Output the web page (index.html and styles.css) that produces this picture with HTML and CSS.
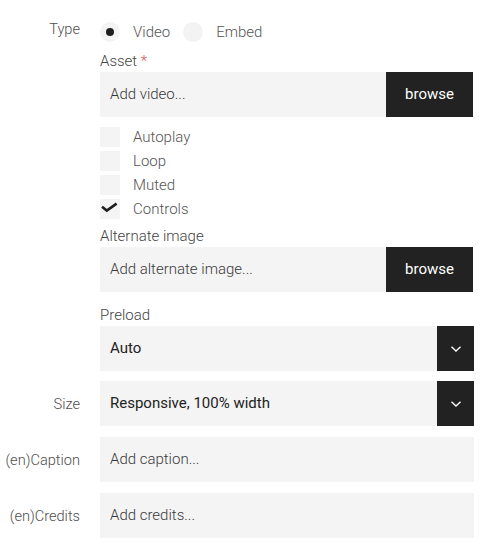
FILE: index.html
```html
<!DOCTYPE html>
<html>
<head>
<meta charset="utf-8">
<link rel="stylesheet" href="styles.css">
</head>
<body>
<form class="form">
  <div class="row row-main">
    <div class="row-label type-label">Type</div>
    <div class="content">
      <div class="radios">
        <label class="radio"><span class="radio-dot checked"></span><span class="opt-text">Video</span></label>
        <label class="radio"><span class="radio-dot"></span><span class="opt-text">Embed</span></label>
      </div>
      <div class="field field-asset">
        <div class="field-label">Asset <span class="req">*</span></div>
        <div class="input-group">
          <div class="input">Add video...</div>
          <div class="btn">browse</div>
        </div>
      </div>
      <div class="checks">
        <label class="check"><span class="box"></span><span class="opt-text">Autoplay</span></label>
        <label class="check"><span class="box"></span><span class="opt-text">Loop</span></label>
        <label class="check"><span class="box"></span><span class="opt-text">Muted</span></label>
        <label class="check"><span class="box"><svg width="20" height="20" viewBox="0 0 20 20"><polyline points="2,7.8 6.8,11.6 16.6,4.6" fill="none" stroke="#1e1e1e" stroke-width="2.6"/></svg></span><span class="opt-text">Controls</span></label>
      </div>
      <div class="field field-alt">
        <div class="field-label">Alternate image</div>
        <div class="input-group">
          <div class="input">Add alternate image...</div>
          <div class="btn">browse</div>
        </div>
      </div>
      <div class="field field-preload">
        <div class="field-label">Preload</div>
        <div class="select">
          <div class="select-value">Auto</div>
          <div class="select-btn"><svg width="12" height="8" viewBox="0 0 12 8"><polyline points="1.5,1.8 6,6 10.5,1.8" fill="none" stroke="#fff" stroke-width="1.4"/></svg></div>
        </div>
      </div>
    </div>
  </div>
  <div class="row">
    <div class="row-label">Size</div>
    <div class="select">
      <div class="select-value">Responsive, 100% width</div>
      <div class="select-btn"><svg width="12" height="8" viewBox="0 0 12 8"><polyline points="1.5,1.8 6,6 10.5,1.8" fill="none" stroke="#fff" stroke-width="1.4"/></svg></div>
    </div>
  </div>
  <div class="row">
    <div class="row-label">(en)Caption</div>
    <div class="input full">Add caption...</div>
  </div>
  <div class="row">
    <div class="row-label">(en)Credits</div>
    <div class="input full">Add credits...</div>
  </div>
</form>
</body>
</html>
```
FILE: styles.css
```css
* { box-sizing: border-box; }
html, body { margin: 0; padding: 0; background: #fff; }
body {
  font-family: Roboto, "Liberation Sans", sans-serif;
  font-size: 15px;
  font-weight: 300;
  color: #444;
}
.form {
  width: 474px;
  padding-top: 22px;
  display: flex;
  flex-direction: column;
  gap: 10px;
}
.row {
  display: grid;
  grid-template-columns: 80px 374px;
  column-gap: 20px;
  align-items: start;
}
.row-label {
  text-align: right;
  font-size: 14.6px;
  line-height: 45px;
  padding-top: 1px;
  color: #4e4e4e;
  white-space: nowrap;
}
.type-label {
  line-height: 20px;
  margin-top: -3px;
  padding-top: 0;
}
.content {
  display: flex;
  flex-direction: column;
}
.radios {
  display: flex;
  gap: 13px;
  height: 20px;
}
.radio, .check {
  display: flex;
  align-items: center;
  gap: 13px;
  height: 20px;
  line-height: 20px;
  color: #555;
}
.radio-dot {
  width: 20px;
  height: 20px;
  border-radius: 50%;
  background: #f3f3f3;
  display: flex;
  align-items: center;
  justify-content: center;
}
.radio-dot.checked::after {
  content: "";
  width: 8px;
  height: 8px;
  border-radius: 50%;
  background: #1e1e1e;
}
.field { display: flex; flex-direction: column; gap: 1px; }
.field-asset { margin-top: 9px; }
.field-alt { margin-top: 7px; }
.field-preload { margin-top: 13px; }
.field-label {
  line-height: 20px;
  color: #444;
}
.req { color: #e05050; }
.input-group {
  display: flex;
  height: 45px;
}
.input {
  flex: 1;
  height: 45px;
  line-height: 45px;
  padding-left: 10px;
  background: #f4f4f4;
  color: #3a3a3a;
}
.input.full { width: 374px; }
.btn {
  width: 87px;
  margin-right: 1px;
  background: #222;
  color: #fff;
  font-weight: 400;
  text-align: center;
  line-height: 45px;
}
.checks {
  margin-top: 10px;
  display: flex;
  flex-direction: column;
  gap: 4px;
}
.box {
  width: 20px;
  height: 20px;
  background: #f4f4f4;
  display: block;
}
.box svg { display: block; }
.select {
  display: flex;
  height: 45px;
  width: 374px;
  background: #f4f4f4;
}
.select-value {
  flex: 1;
  padding-left: 10px;
  line-height: 45px;
  font-weight: 400;
  color: #222;
}
.select-btn {
  width: 37px;
  background: #222;
  display: flex;
  align-items: center;
  justify-content: center;
}
.select-btn svg { display: block; }
```
